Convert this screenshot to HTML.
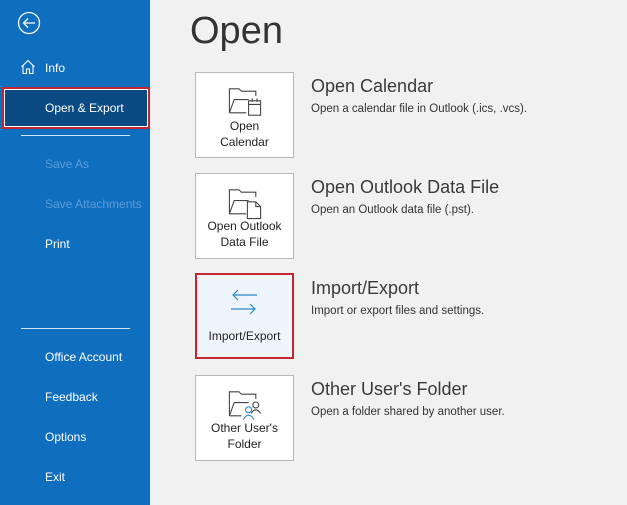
<!DOCTYPE html>
<html><head><style>
*{margin:0;padding:0;box-sizing:border-box}
body{width:627px;height:505px;overflow:hidden;background:#f1f1f1;font-family:"Liberation Sans",sans-serif;position:relative}
#side{position:absolute;left:0;top:0;width:150px;height:505px;background:#106ebe;color:#fff}
.it{position:absolute;left:45px;font-size:12px;line-height:14px}
.dis{color:#5b9bd8}
.ln{position:absolute;left:21px;width:109px;height:1px;background:#cfe3f5}
#sel{position:absolute;left:2px;top:87px;width:148px;height:42px;background:#0b4a83;border:2px solid #c4262e;outline:1px solid #fff;outline-offset:-3px}
h1{position:absolute;left:190px;top:10px;font-size:38px;font-weight:normal;color:#333;font-family:"Liberation Sans",sans-serif}
.tile{position:absolute;left:195px;width:99px;height:86px;background:#fff;border:1px solid #b8b8b8;text-align:center;font-size:12px;line-height:16px;color:#222}
.tile svg{position:absolute;left:31px;top:11px}
.tile .lb{position:absolute;left:0;right:0}
.tt{position:absolute;left:311px;font-size:18px;color:#3a3a3a}
.ds{position:absolute;left:311px;font-size:11.5px;color:#333}
</style></head><body>
<div id="side">
<svg style="position:absolute;left:17px;top:11px" width="24" height="24" viewBox="0 0 24 24"><circle cx="12" cy="12" r="10.5" fill="none" stroke="#fff" stroke-width="1.3"/><path d="M18 12H6.5M11 7.5L6.5 12L11 16.5" fill="none" stroke="#fff" stroke-width="1.3"/></svg>
<svg style="position:absolute;left:20px;top:59px" width="16" height="16" viewBox="0 0 16 16"><path d="M1.5 8L8 1.5L14.5 8M3 6.5V14.5H6.5V10H9.5V14.5H13V6.5" fill="none" stroke="#fff" stroke-width="1.1"/></svg>
<div class="it" style="left:45px;top:61px">Info</div>
<div id="sel"></div>
<div class="it" style="top:101px">Open &amp; Export</div>
<div class="ln" style="top:135px"></div>
<div class="it dis" style="top:157px">Save As</div>
<div class="it dis" style="top:197px">Save Attachments</div>
<div class="it" style="top:237px">Print</div>
<div class="ln" style="top:328px"></div>
<div class="it" style="top:350px">Office Account</div>
<div class="it" style="top:390px">Feedback</div>
<div class="it" style="top:430px">Options</div>
<div class="it" style="top:470px">Exit</div>
</div>
<h1>Open</h1>

<div class="tile" style="top:72px"><svg width="36" height="36" viewBox="0 0 30 30" fill="none" stroke="#444" stroke-width="0.9"><path d="M2 24V4H10L12 6H24V10M2 24L6 13H18M2 24H16"/><rect x="18" y="14" width="10" height="12" fill="#fff"/><path d="M18 17H28M21 12V15M25 12V15"/></svg><div class="lb" style="top:45px">Open<br>Calendar</div></div>
<div class="tt" style="top:76px">Open Calendar</div>
<div class="ds" style="top:103px">Open a calendar file in Outlook (.ics, .vcs).</div>

<div class="tile" style="top:173px"><svg width="36" height="36" viewBox="0 0 30 30" fill="none" stroke="#444" stroke-width="0.9"><path d="M2 24V4H10L12 6H24V10M2 24L6 13H18M2 24H16"/><path d="M17 14H24L28 18V28H17Z" fill="#fff"/><path d="M24 14V18H28"/></svg><div class="lb" style="top:44px">Open Outlook<br>Data File</div></div>
<div class="tt" style="top:177px">Open Outlook Data File</div>
<div class="ds" style="top:204px">Open an Outlook data file (.pst).</div>

<div class="tile" style="top:273px;background:#eef5fc;border:2px solid #c4262e"><svg style="left:32px;top:14px" width="30" height="28" viewBox="0 0 30 28" fill="none" stroke="#2b88c8" stroke-width="1.2"><path d="M4 6H28M9 1L4 6L9 11M2 20H26M21 15L26 20L21 25"/></svg><div class="lb" style="top:53px">Import/Export</div></div>
<div class="tt" style="top:278px">Import/Export</div>
<div class="ds" style="top:305px">Import or export files and settings.</div>

<div class="tile" style="top:375px"><svg width="36" height="36" viewBox="0 0 30 30" fill="none" stroke="#444" stroke-width="0.9"><path d="M2 24V4H10L12 6H24V10M2 24L6 13H18M2 24H12"/><circle cx="24" cy="15" r="2.5"/><path d="M20 22Q24 16 28 22"/><circle cx="18" cy="19" r="2.5" stroke="#2b88c8"/><path d="M13.5 27Q18 20 22.5 27" stroke="#2b88c8"/></svg><div class="lb" style="top:44px">Other User's<br>Folder</div></div>
<div class="tt" style="top:379px">Other User's Folder</div>
<div class="ds" style="top:406px">Open a folder shared by another user.</div>
</body></html>
